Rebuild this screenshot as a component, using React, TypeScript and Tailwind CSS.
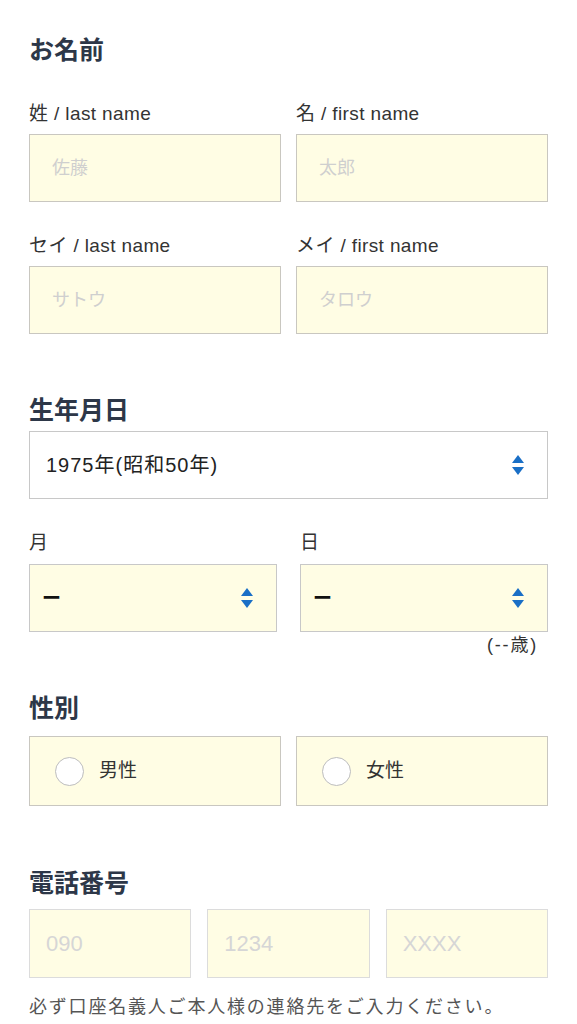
const font = { fontFamily: '"Liberation Sans", "Noto Sans CJK JP", sans-serif' }

function Heading({ children, className = '' }: { children: React.ReactNode; className?: string }) {
  return (
    <h2 className={`text-[25px] font-bold leading-[32px] text-[#2d3748] ${className}`}>{children}</h2>
  )
}

function Label({ children, className = '' }: { children: React.ReactNode; className?: string }) {
  return <p className={`text-[19px] leading-[28px] tracking-[0.02em] text-[#333] ${className}`}>{children}</p>
}

function TextBox({ placeholder, className = '' }: { placeholder: string; className?: string }) {
  return (
    <div
      className={`flex h-[68px] items-center border border-[#c9c7c0] bg-[#fffde4] pl-[22px] text-[18px] text-[#cfcfcf] ${className}`}
    >
      {placeholder}
    </div>
  )
}

function Arrows() {
  return (
    <svg width="12" height="20" viewBox="0 0 12 20" className="shrink-0">
      <path d="M6 0 L12 8 L0 8 Z" fill="#1a6fc6" />
      <path d="M0 12 L12 12 L6 20 Z" fill="#1a6fc6" />
    </svg>
  )
}

function Select({ value, yellow }: { value: React.ReactNode; yellow?: boolean }) {
  return (
    <div
      className={`flex h-[68px] items-center justify-between border border-[#c8c8c8] pl-[16px] pr-[23px] text-[20px] tracking-[0.05em] text-[#222] ${
        yellow ? 'bg-[#fffde4]' : 'bg-white'
      }`}
    >
      <span>{value}</span>
      <Arrows />
    </div>
  )
}

function Radio({ label }: { label: string }) {
  return (
    <div className="flex h-[70px] items-center gap-[15px] border border-[#c9c7c0] bg-[#fffde4] pl-[25px] text-[19px] text-[#333]">
      <span className="h-[29px] w-[29px] rounded-full border border-[#bdbdbd] bg-white" />
      <span>{label}</span>
    </div>
  )
}

const dash = <span className="-ml-[4px] text-[19px] font-bold text-[#111]">ー</span>

export default function App() {
  return (
    <div className="min-h-screen bg-white px-[29px] pt-[34px]" style={font}>
      {/* お名前 */}
      <Heading>お名前</Heading>
      <div className="mt-[34px] grid grid-cols-2 gap-x-[15px]">
        <div>
          <Label className="mb-[6px]">姓 / last name</Label>
          <TextBox placeholder="佐藤" />
        </div>
        <div>
          <Label className="mb-[6px]">名 / first name</Label>
          <TextBox placeholder="太郎" />
        </div>
      </div>
      <div className="mt-[30px] grid grid-cols-2 gap-x-[15px]">
        <div>
          <Label className="mb-[6px]">セイ / last name</Label>
          <TextBox placeholder="サトウ" />
        </div>
        <div>
          <Label className="mb-[6px]">メイ / first name</Label>
          <TextBox placeholder="タロウ" />
        </div>
      </div>

      {/* 生年月日 */}
      <Heading className="mt-[60px]">生年月日</Heading>
      <div className="mt-[5px]">
        <Select value="1975年(昭和50年)" />
      </div>
      <div className="mt-[30px] grid grid-cols-2 gap-x-[23px]">
        <div>
          <Label className="mb-[7px]">月</Label>
          <Select yellow value={dash} />
        </div>
        <div>
          <Label className="mb-[7px]">日</Label>
          <Select yellow value={dash} />
        </div>
      </div>
      <p className="pr-[10px] text-right text-[18px] leading-[26px] tracking-[0.1em] text-[#333]">(--歳)</p>

      {/* 性別 */}
      <Heading className="mt-[34px]">性別</Heading>
      <div className="mt-[12px] grid grid-cols-2 gap-x-[15px]">
        <Radio label="男性" />
        <Radio label="女性" />
      </div>

      {/* 電話番号 */}
      <Heading className="mt-[61px]">電話番号</Heading>
      <div className="mt-[10px] grid grid-cols-3 gap-x-[16px]">
        <TextBox placeholder="090" className="!h-[69px] !border-[#dcdcdc] !pl-[16px] !text-[22px] !text-[#d6d6d6]" />
        <TextBox placeholder="1234" className="!h-[69px] !border-[#dcdcdc] !pl-[16px] !text-[22px] !text-[#d6d6d6]" />
        <TextBox placeholder="XXXX" className="!h-[69px] !border-[#dcdcdc] !pl-[16px] !text-[22px] !text-[#d6d6d6]" />
      </div>
      <p className="mt-[17px] text-[18px] leading-[24px] tracking-[0.1em] text-[#555]">
        必ず口座名義人ご本人様の連絡先をご入力ください。
      </p>
    </div>
  )
}
